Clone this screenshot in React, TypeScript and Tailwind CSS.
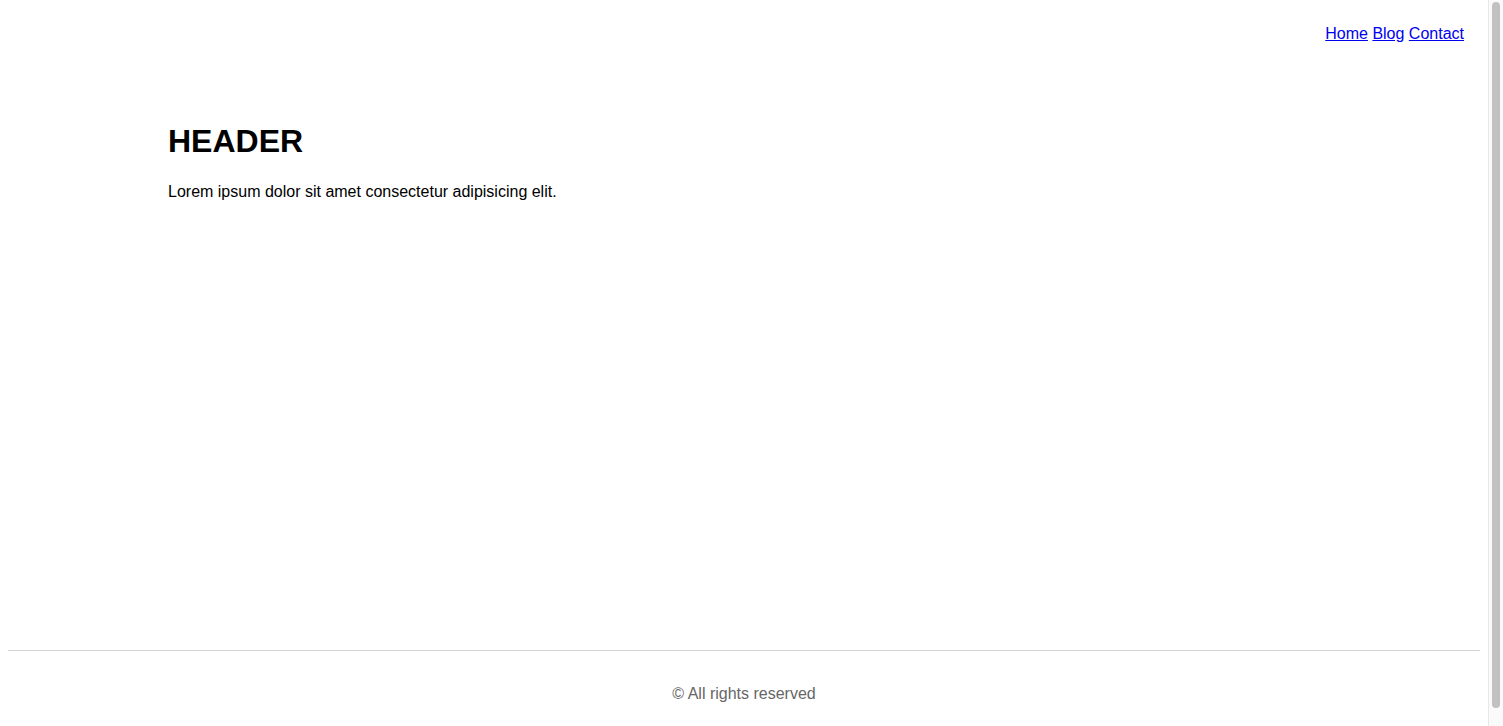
export default function App() {
  return (
    <div className="relative">
      <div
        className="ml-2 mr-[23px] my-2 flex min-h-screen flex-col text-base leading-[normal] text-black"
        style={{ fontFamily: '"Liberation Sans", Arial, sans-serif' }}
      >
        <nav className="pb-[15px] pl-4 pr-4 pt-[17px] text-right">
          <a href="#" className="text-[#0000ee] underline">Home</a>{" "}
          <a href="#" className="text-[#0000ee] underline">Blog</a>{" "}
          <a href="#" className="text-[#0000ee] underline">Contact</a>
        </nav>
        <main className="flex-1 pl-[160px] pt-[65px]">
          <h1 className="mb-[23px] text-[32px] font-bold leading-[normal]">HEADER</h1>
          <p>Lorem ipsum dolor sit amet consectetur adipisicing elit.</p>
        </main>
        <footer className="border-t border-[#d4d4d4] pb-[31px] pt-[34px] text-center text-[#666666]">
          <p>© All rights reserved</p>
        </footer>
      </div>
      <div className="fixed right-0 top-0 h-screen w-[15px] border-l border-[#e8e8e8] bg-[#fafafa]">
        <div className="absolute left-[3px] top-[2px] h-[706px] w-[8px] rounded-full bg-[#c1c1c1]" />
      </div>
    </div>
  );
}
